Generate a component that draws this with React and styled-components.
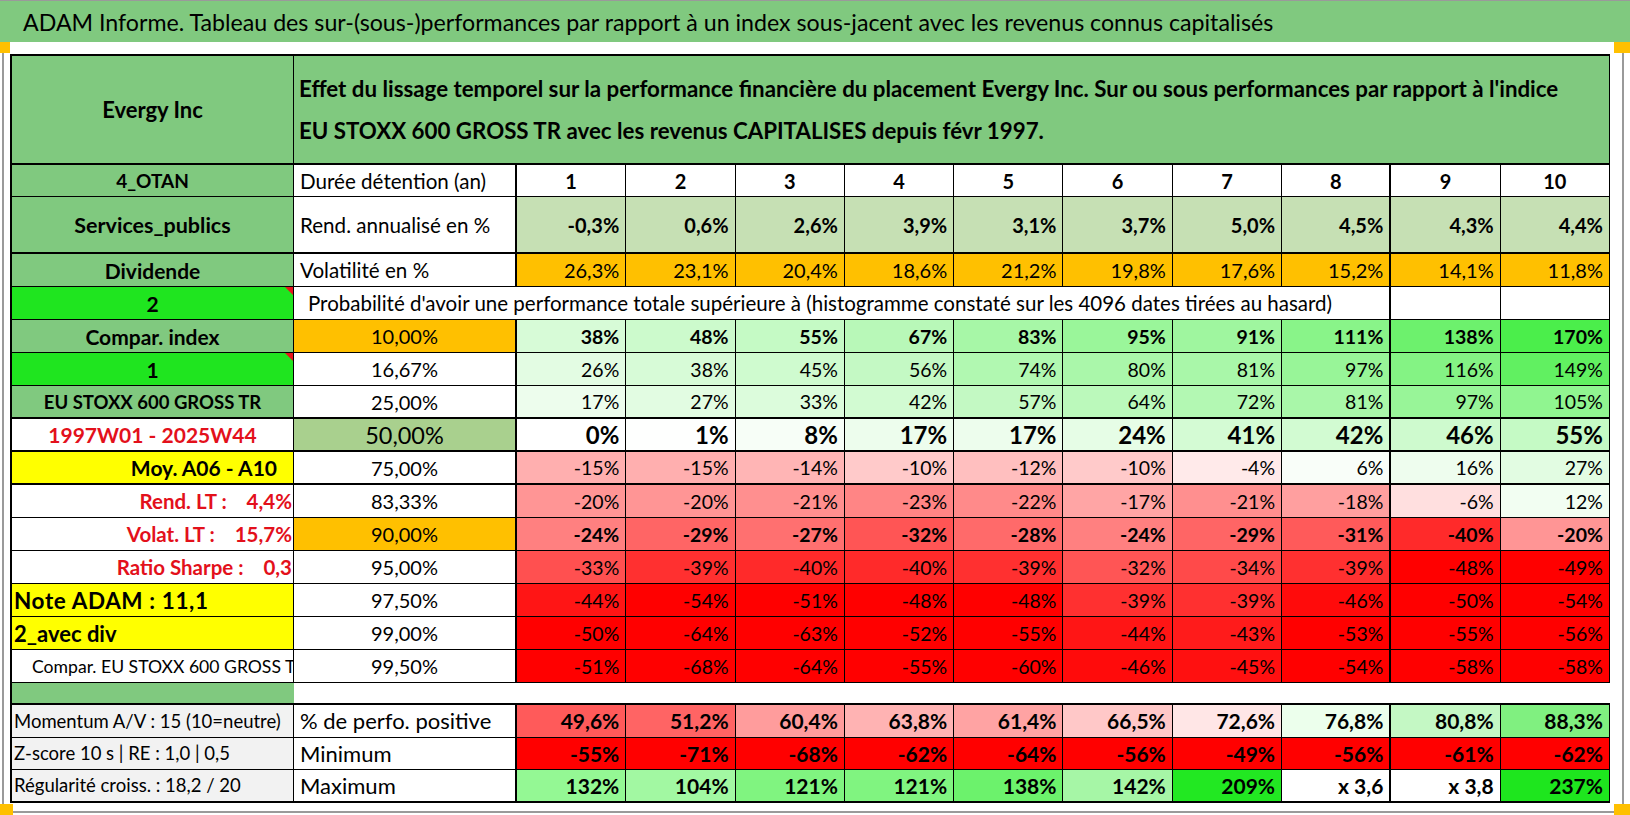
import React from 'react';
import styled, { createGlobalStyle } from 'styled-components';

const GREEN = '#80c97f';
const BRIGHT = '#1fe51f';
const ORANGE = '#ffc000';
const YELLOW = '#ffff00';
const SAGE = '#c6e0b4';
const OLIVE = '#a9d08e';
const RED_TXT = '#e3101b';

const GlobalStyle = createGlobalStyle`
  html, body { margin: 0; padding: 0; background: #fff; }
  body { font-family: Lato, "Open Sans", sans-serif; color: #000; }
`;

const COLS = '282px 223px repeat(10, 109.3px)';

const Page = styled.div`
  position: relative;
  width: 1630px;
  height: 815px;
  box-sizing: border-box;
  border-top: 1px solid #9a9a9a;
  display: flex;
  flex-direction: column;
  overflow: hidden;
`;

const TitleBand = styled.div`
  height: 41px;
  background: ${GREEN};
  display: flex;
  align-items: center;
  padding-left: 23px;
  font-size: 23.2px;
  white-space: nowrap;
`;

const Sheet = styled.div`
  flex: 1;
  margin: 0 6px 2px 2px;
  border-left: 2px solid #9a9a9a;
  border-right: 2px solid #9a9a9a;
  border-bottom: 2px solid #9a9a9a;
  padding: 12px 0 0 6px;
  display: flex;
  flex-direction: column;
`;

const Grid = styled.div`
  display: grid;
  grid-template-columns: ${COLS};
  grid-template-rows: ${p => p.$rows};
  border-top: 2px solid #000;
  border-left: 2px solid #000;
  width: max-content;
`;

const SpacerRow = styled.div`
  height: 20px;
  display: flex;
  border-left: 2px solid #000;
`;

const SpacerCell = styled.div`
  width: 282px;
  background: ${GREEN};
`;

const Cell = styled.div`
  position: relative;
  box-sizing: border-box;
  display: flex;
  align-items: center;
  justify-content: ${p => (p.$align === 'left' ? 'flex-start' : p.$align === 'center' ? 'center' : 'flex-end')};
  padding: 0 ${p => p.$pr ?? 6}px 0 ${p => p.$pl ?? 6}px;
  background: ${p => p.$bg || '#fff'};
  color: ${p => p.$color || '#000'};
  font-weight: ${p => (p.$bold ? 700 : 400)};
  font-size: ${p => p.$size || 19}px;
  letter-spacing: ${p => p.$ls || 0}px;
  border-right: ${p => p.$br ?? 1}px solid #000;
  border-bottom: ${p => p.$bb ?? 1}px solid #000;
  grid-column: ${p => (p.$span ? `span ${p.$span}` : 'auto')};
  white-space: nowrap;
  overflow: hidden;

  ${p => p.$note && `
    &::after {
      content: '';
      position: absolute;
      top: 0;
      right: 0;
      border-top: 8px solid #e8141c;
      border-left: 8px solid transparent;
    }
  `}
`;

const Description = styled(Cell)`
  white-space: normal;
  line-height: 42px;
  font-size: 22.3px;
  font-weight: 700;
  padding-left: 5px;
`;

const Corner = styled.div`
  position: absolute;
  width: ${p => p.$w || 10}px;
  height: 11px;
  background: ${ORANGE};
  ${p => p.$pos};
`;

const heat = v => {
  if (v < 0) {
    const t = Math.min(1, -v / 48);
    const c = Math.round(255 * (1 - t));
    return `rgb(255,${c},${c})`;
  }
  const t = Math.min(1, v / 200);
  return `rgb(${Math.round(255 - 212 * t)},${Math.round(255 - 20 * t)},${Math.round(255 - 212 * t)})`;
};

const years = [1, 2, 3, 4, 5, 6, 7, 8, 9, 10];
const rend = ['-0,3%', '0,6%', '2,6%', '3,9%', '3,1%', '3,7%', '5,0%', '4,5%', '4,3%', '4,4%'];
const vol = ['26,3%', '23,1%', '20,4%', '18,6%', '21,2%', '19,8%', '17,6%', '15,2%', '14,1%', '11,8%'];

const heatRows = [
  { label: 'Compar. index', a: { bg: GREEN, bold: true, align: 'center', size: 21 }, pct: '10,00%', pctBg: ORANGE, bold: true,
    values: [38, 48, 55, 67, 83, 95, 91, 111, 138, 170] },
  { label: '1', a: { bg: BRIGHT, bold: true, align: 'center', size: 21, note: true }, pct: '16,67%',
    values: [26, 38, 45, 56, 74, 80, 81, 97, 116, 149] },
  { label: 'EU STOXX 600 GROSS TR', a: { bg: GREEN, bold: true, align: 'center', size: 18.5 }, pct: '25,00%', bb: 2,
    values: [17, 27, 33, 42, 57, 64, 72, 81, 97, 105] },
  { label: '1997W01 - 2025W44', a: { color: RED_TXT, bold: true, align: 'center', size: 21 }, pct: '50,00%', pctBg: OLIVE, pctSize: 23.5,
    bold: true, size: 24, bb: 2, values: [0, 1, 8, 17, 17, 24, 41, 42, 46, 55] },
  { label: 'Moy. A06 - A10', a: { bg: YELLOW, bold: true, align: 'right', size: 21, pr: 16 }, pct: '75,00%', bb: 2,
    values: [-15, -15, -14, -10, -12, -10, -4, 6, 16, 27] },
  { label: 'Rend. LT :\u00a0\u00a0\u00a0 4,4%', a: { color: RED_TXT, bold: true, align: 'right', size: 20.5, pr: 1 }, pct: '83,33%',
    values: [-20, -20, -21, -23, -22, -17, -21, -18, -6, 12] },
  { label: 'Volat. LT :\u00a0\u00a0\u00a0 15,7%', a: { color: RED_TXT, bold: true, align: 'right', size: 20.5, pr: 1 }, pct: '90,00%', pctBg: ORANGE,
    bold: true, values: [-24, -29, -27, -32, -28, -24, -29, -31, -40, -20] },
  { label: 'Ratio Sharpe :\u00a0\u00a0\u00a0 0,3', a: { color: RED_TXT, bold: true, align: 'right', size: 20.5, pr: 1 }, pct: '95,00%',
    values: [-33, -39, -40, -40, -39, -32, -34, -39, -48, -49] },
  { label: 'Note ADAM : 11,1', a: { bg: YELLOW, bold: true, align: 'left', size: 22.5, pl: 2, ls: 0.6 }, pct: '97,50%',
    values: [-44, -54, -51, -48, -48, -39, -39, -46, -50, -54] },
  { label: '2_avec div', a: { bg: YELLOW, bold: true, align: 'left', size: 22, pl: 2 }, pct: '99,00%',
    values: [-50, -64, -63, -52, -55, -44, -43, -53, -55, -56] },
  { label: 'Compar. EU STOXX 600 GROSS TR', a: { align: 'left', size: 17.6, pl: 20 }, pct: '99,50%',
    values: [-51, -68, -64, -55, -60, -46, -45, -54, -58, -58] },
];

const bottomRows = [
  { label: 'Momentum A/V : 15 (10=neutre)', name: '% de perfo. positive',
    values: [['49,6%', '#ff5a5a'], ['51,2%', '#ff6464'], ['60,4%', '#ff9c9c'], ['63,8%', '#ffb3b3'], ['61,4%', '#ffa3a3'],
      ['66,5%', '#ffc8c8'], ['72,6%', '#ffe6e6'], ['76,8%', '#ecffec'], ['80,8%', '#c4f8c4'], ['88,3%', '#80f080']] },
  { label: 'Z-score 10 s | RE : 1,0 | 0,5', name: 'Minimum',
    values: ['-55%', '-71%', '-68%', '-62%', '-64%', '-56%', '-49%', '-56%', '-61%', '-62%'].map(v => [v, '#ff0000']) },
  { label: 'Régularité croiss. : 18,2 / 20', name: 'Maximum',
    values: [['132%', '#94f894'], ['104%', '#a2f8a2'], ['121%', '#80f480'], ['121%', '#80f480'], ['138%', '#6cf26c'],
      ['142%', '#a6f6a6'], ['209%', '#22e822'], ['x 3,6', '#ffffff'], ['x 3,8', '#ffffff'], ['237%', '#1ee61e']] },
];

const colBorder = i => (i === 7 ? 2 : 1);

const TopTable = () => (
  <Grid $rows="109px 32px 57px repeat(13, 33px)">
    <Cell $bg={GREEN} $bold $align="center" $size={22} $bb={2}>Evergy Inc</Cell>
    <Description $bg={GREEN} $align="left" $span={11} $bb={2}>
      <span>
        Effet du lissage temporel sur la performance financière du placement Evergy Inc. Sur ou sous performances par rapport à l'indice
        <br />
        EU STOXX 600 GROSS TR avec les revenus CAPITALISES depuis févr 1997.
      </span>
    </Description>

    <Cell $bg={GREEN} $bold $align="center" $size={19}>4_OTAN</Cell>
    <Cell $align="left" $size={20.6} $br={2}>Durée détention (an)</Cell>
    {years.map((y, i) => (
      <Cell key={y} $bold $align="center" $size={20} $br={colBorder(i)}>{y}</Cell>
    ))}

    <Cell $bg={GREEN} $bold $align="center" $size={21.5} $bb={2}>Services_publics</Cell>
    <Cell $align="left" $size={20.6} $br={2} $bb={2}>Rend. annualisé en %</Cell>
    {rend.map((v, i) => (
      <Cell key={i} $bg={SAGE} $bold $size={20} $bb={2} $br={colBorder(i)}>{v}</Cell>
    ))}

    <Cell $bg={GREEN} $bold $align="center" $size={21}>Dividende</Cell>
    <Cell $align="left" $size={20.6} $br={2}>Volatilité en %</Cell>
    {vol.map((v, i) => (
      <Cell key={i} $bg={ORANGE} $size={20} $br={colBorder(i)}>{v}</Cell>
    ))}

    <Cell $bg={BRIGHT} $bold $align="center" $size={21} $note>2</Cell>
    <Cell $align="left" $size={20.5} $span={9} $pl={14} $br={2}>
      Probabilité d'avoir une performance totale supérieure à (histogramme constaté sur les 4096 dates tirées au hasard)
    </Cell>
    <Cell />
    <Cell />

    {heatRows.map(r => (
      <React.Fragment key={r.label}>
        <Cell $bg={r.a.bg} $color={r.a.color} $bold={r.a.bold} $align={r.a.align} $size={r.a.size}
          $pl={r.a.pl} $pr={r.a.pr} $ls={r.a.ls} $note={r.a.note} $bb={r.bb}>
          {r.label}
        </Cell>
        <Cell $bg={r.pctBg} $align="center" $size={r.pctSize || 20} $br={2} $bb={r.bb}>{r.pct}</Cell>
        {r.values.map((v, i) => (
          <Cell key={i} $bg={heat(v)} $bold={r.bold} $size={r.size || 19.5} $bb={r.bb} $br={colBorder(i)}>{v}%</Cell>
        ))}
      </React.Fragment>
    ))}
  </Grid>
);

const BottomTable = () => (
  <Grid $rows="repeat(3, 32.5px)">
    {bottomRows.map((r, ri) => (
      <React.Fragment key={r.name}>
        <Cell $bg="#f2f2f2" $align="left" $size={18.5} $pl={2} $bb={ri === 2 ? 2 : 1}>{r.label}</Cell>
        <Cell $align="left" $size={22} $pl={6} $br={2} $bb={ri === 2 ? 2 : 1}>{r.name}</Cell>
        {r.values.map(([v, bg], i) => (
          <Cell key={i} $bg={bg} $bold $size={21} $bb={ri === 2 ? 2 : 1} $br={colBorder(i)}>{v}</Cell>
        ))}
      </React.Fragment>
    ))}
  </Grid>
);

export default function App() {
  return (
    <>
      <GlobalStyle />
      <Page>
        <TitleBand>
          ADAM Informe. Tableau des sur-(sous-)performances par rapport à un index sous-jacent avec les revenus connus capitalisés
        </TitleBand>
        <Sheet>
          <TopTable />
          <SpacerRow>
            <SpacerCell />
          </SpacerRow>
          <BottomTable />
        </Sheet>
        <Corner $pos="left: 0; top: 41px;" />
        <Corner $pos="right: 0; top: 41px;" $w={16} />
        <Corner $pos="left: 0; bottom: 0;" $w={13} />
        <Corner $pos="right: 0; bottom: 0;" $w={16} />
      </Page>
    </>
  );
}
